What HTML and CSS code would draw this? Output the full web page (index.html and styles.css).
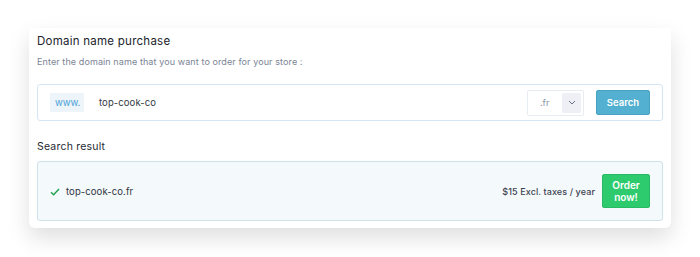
FILE: index.html
```html
<!DOCTYPE html>
<html>
<head>
<meta charset="utf-8">
<link rel="stylesheet" href="styles.css">
</head>
<body>
<div class="page">
<div class="card">
  <h1 class="title">Domain name purchase</h1>
  <p class="subtitle">Enter the domain name that you want to order for your store :</p>
  <div class="search-box">
    <span class="prefix">www.</span>
    <span class="domain">top-cook-co</span>
    <div class="select">
      <span class="tld">.fr</span>
      <span class="chevron"><svg width="8" height="5" viewBox="0 0 8 5"><path d="M1 1l3 3 3-3" fill="none" stroke="#6b7486" stroke-width="1"/></svg></span>
    </div>
    <button class="btn-search">Search</button>
  </div>
  <h2 class="section">Search result</h2>
  <div class="result">
    <svg class="check" width="10" height="8" viewBox="0 0 10 8"><path d="M1 4.2l2.6 2.6L9 1" fill="none" stroke="#1fa34a" stroke-width="1.4"/></svg>
    <span class="result-name">top-cook-co.fr</span>
    <span class="price">$15 Excl. taxes / year</span>
    <button class="btn-order">Order<br>now!</button>
  </div>
</div>
</div>
</body>
</html>
```

FILE: styles.css
```css
* { box-sizing: border-box; }
html, body {
  margin: 0;
  background: #ffffff;
}
body {
  font-family: "Inter", "Open Sans", sans-serif;
  color: #2b2f38;
}
.page {
  min-height: 257px;
  padding: 28px 0 0 29px;
}
.card {
  width: 642px;
  padding: 5px 8px 7px;
  background: #fff;
  border-radius: 0 0 6px 6px;
  box-shadow: 0 10px 22px rgba(0, 0, 0, 0.13);
}
.title {
  margin: 0;
  font-size: 11.5px;
  line-height: 16px;
  font-weight: 400;
  color: #20242c;
  letter-spacing: 0.25px;
}
.subtitle {
  margin: 7px 0 0;
  font-size: 9px;
  line-height: 12px;
  color: #7b8496;
  letter-spacing: 0.1px;
}
.search-box {
  margin-top: 16px;
  height: 37px;
  border: 1px solid #d4e6f5;
  border-radius: 3px;
  display: flex;
  align-items: center;
  padding: 0 12px 0 12px;
}
.prefix {
  background: #edf5fa;
  color: #4a9fd8;
  font-size: 9.5px;
  height: 19px;
  line-height: 19px;
  padding: 0 5px;
  width: 34px;
}
.domain {
  margin-left: 15px;
  font-size: 9.5px;
  color: #333844;
  flex: 1;
  letter-spacing: 0.1px;
}
.select {
  width: 57px;
  height: 26px;
  border: 1px solid #e8edf3;
  border-radius: 2px;
  display: flex;
  align-items: center;
  justify-content: space-between;
  padding: 0 2px 0 12px;
}
.tld {
  font-size: 9px;
  color: #8a93a3;
}
.chevron {
  width: 19px;
  height: 20px;
  background: #eef0f6;
  border-radius: 2px;
  display: flex;
  align-items: center;
  justify-content: center;
}
.btn-search {
  margin-left: 12px;
  width: 54px;
  height: 25px;
  background: #54b0d1;
  border: 1px solid #4aa2c2;
  border-radius: 2px;
  color: #fff;
  font-family: inherit;
  font-size: 9.5px;
  font-weight: 600;
  padding: 0;
}
.section {
  margin: 19px 0 0;
  font-size: 10.5px;
  line-height: 14px;
  font-weight: 400;
  color: #262a33;
  letter-spacing: 0.2px;
}
.result {
  margin-top: 7px;
  height: 60px;
  background: #f4f9fb;
  border: 1px solid #cfe2ec;
  border-radius: 3px;
  display: flex;
  align-items: center;
  padding: 0 12px 0 12px;
}
.check { margin-right: 6px; margin-top: 1px; }
.result-name {
  font-size: 9.5px;
  color: #2f3440;
  flex: 1;
  letter-spacing: 0.1px;
}
.price {
  font-size: 9px;
  font-weight: 500;
  color: #3d4350;
  letter-spacing: 0.1px;
}
.btn-order {
  margin-left: 7px;
  width: 48px;
  height: 34px;
  background: #2ecb6e;
  border: 1px solid #29bb63;
  border-radius: 2px;
  color: #fff;
  font-family: inherit;
  font-size: 10px;
  font-weight: 600;
  line-height: 12px;
  padding: 0;
}
```
